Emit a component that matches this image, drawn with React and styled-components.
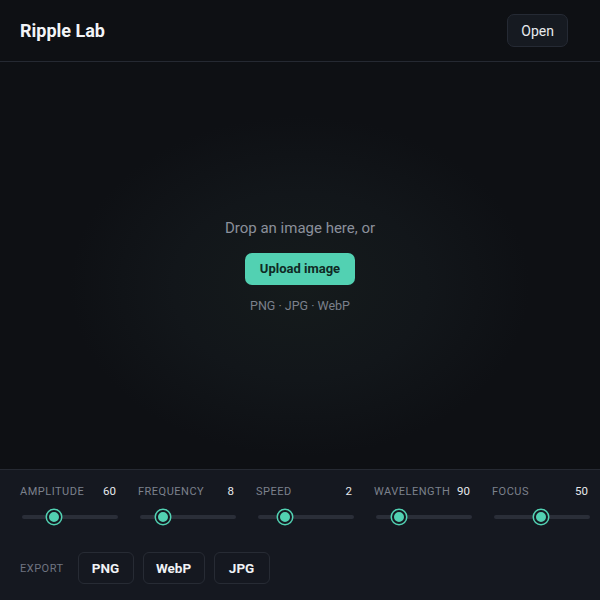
import styled, {createGlobalStyle} from "styled-components";

const GlobalStyle = createGlobalStyle`
  html, body {
    margin: 0;
    padding: 0;
    background: #0e1014;
  }
  body {
    font-family: Roboto, "Noto Sans", "Liberation Sans", sans-serif;
    color: #e8eaee;
  }
`;

const Page = styled.div`
  width: 600px;
  height: 600px;
  display: flex;
  flex-direction: column;
  background: #0e1014;
  overflow: hidden;
`;

const Header = styled.header`
  height: 61px;
  flex-shrink: 0;
  display: flex;
  align-items: center;
  justify-content: space-between;
  padding: 0 32px 0 20px;
  border-bottom: 1px solid #252932;
`;

const Title = styled.h1`
  margin: 0;
  font-size: 18px;
  font-weight: 700;
  color: #f2f4f7;
`;

const GhostButton = styled.button`
  height: 33px;
  padding: 0 13px;
  border-radius: 7px;
  border: 1px solid #252a34;
  background: #161a21;
  color: #e8eaee;
  font-family: inherit;
  font-size: 14px;
`;

const Stage = styled.main`
  flex: 1;
  display: flex;
  flex-direction: column;
  align-items: center;
  justify-content: center;
  background: radial-gradient(ellipse 230px 170px at 50% 55%, #151b1c 0%, #12161a 55%, #0e1014 100%);
`;

const Hint = styled.p`
  margin: 0;
  font-size: 15px;
  color: #8b909b;
`;

const UploadButton = styled.button`
  margin-top: 16px;
  height: 32px;
  width: 110px;
  border: none;
  border-radius: 7px;
  background: #52d1b2;
  color: #0f2a24;
  font-family: inherit;
  font-size: 13px;
  font-weight: 700;
`;

const Formats = styled.p`
  margin: 13px 0 0;
  font-size: 12.5px;
  color: #7b808b;
`;

const Panel = styled.section`
  height: 131px;
  flex-shrink: 0;
  box-sizing: border-box;
  background: #151820;
  border-top: 1px solid #262a33;
  padding: 14px 0 0 20px;
  display: flex;
  flex-direction: column;
`;

const Sliders = styled.div`
  display: grid;
  grid-template-columns: repeat(5, 98px);
  column-gap: 20px;
`;

const Control = styled.div`
  display: flex;
  flex-direction: column;
`;

const LabelRow = styled.div`
  display: flex;
  justify-content: space-between;
  align-items: center;
  height: 14px;
  padding-right: 2px;
`;

const Label = styled.span`
  font-size: 11px;
  letter-spacing: 0.5px;
  color: #7c818c;
`;

const Value = styled.span`
  font-size: 11.5px;
  font-weight: 400;
  color: #e6e8ec;
`;

const Track = styled.div`
  position: relative;
  margin: 17px 0 0 2px;
  height: 4px;
  border-radius: 2px;
  background: #2a2e38;
  display: flex;
  align-items: center;
`;

const Thumb = styled.div`
  position: absolute;
  width: 10px;
  height: 10px;
  border-radius: 50%;
  background: #52d1b2;
  border: 2.5px solid #151820;
  box-shadow: 0 0 0 1.5px #52d1b2;
  transform: translateX(-50%);
`;

const ExportRow = styled.div`
  margin-top: 33px;
  display: flex;
  align-items: center;
  gap: 9px;
`;

const ExportLabel = styled.span`
  font-size: 11px;
  letter-spacing: 0.5px;
  color: #6f7480;
  margin-right: 5px;
`;

const FormatButton = styled.button`
  height: 32px;
  width: ${props => props.w}px;
  border-radius: 6px;
  border: 1px solid #272b34;
  background: transparent;
  color: #f0f2f5;
  font-family: inherit;
  font-size: 13.5px;
  font-weight: 700;
`;

const controls = [
  {name: 'AMPLITUDE', value: 60, pos: 0.33},
  {name: 'FREQUENCY', value: 8, pos: 0.24},
  {name: 'SPEED', value: 2, pos: 0.28},
  {name: 'WAVELENGTH', value: 90, pos: 0.24},
  {name: 'FOCUS', value: 50, pos: 0.49},
];

const formats = [
  {name: 'PNG', w: 56},
  {name: 'WebP', w: 62},
  {name: 'JPG', w: 56},
];

export default function App() {
  return (
    <Page>
      <GlobalStyle/>
      <Header>
        <Title>Ripple Lab</Title>
        <GhostButton>Open</GhostButton>
      </Header>
      <Stage>
        <Hint>Drop an image here, or</Hint>
        <UploadButton>Upload image</UploadButton>
        <Formats>PNG · JPG · WebP</Formats>
      </Stage>
      <Panel>
        <Sliders>
          {controls.map(item =>
            <Control key={item.name}>
              <LabelRow>
                <Label>{item.name}</Label>
                <Value>{item.value}</Value>
              </LabelRow>
              <Track>
                <Thumb style={{left: `${item.pos * 100}%`}}/>
              </Track>
            </Control>
          )}
        </Sliders>
        <ExportRow>
          <ExportLabel>EXPORT</ExportLabel>
          {formats.map(f =>
            <FormatButton key={f.name} w={f.w}>{f.name}</FormatButton>
          )}
        </ExportRow>
      </Panel>
    </Page>
  )
}
